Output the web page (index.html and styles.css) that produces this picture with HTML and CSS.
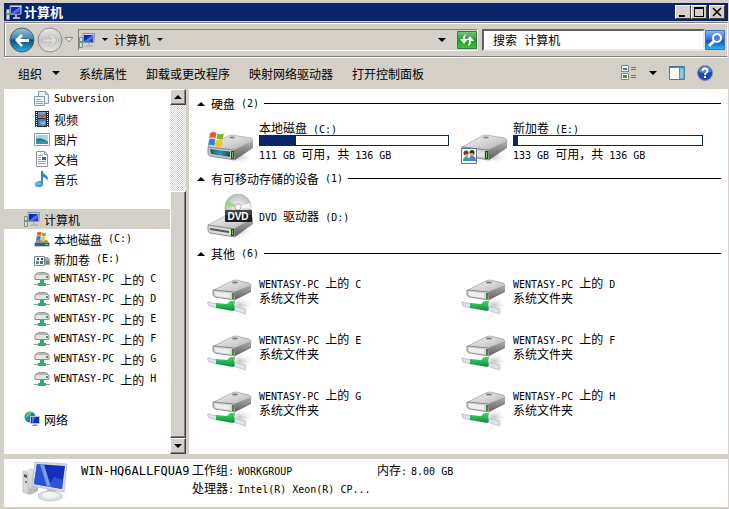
FILE: index.html
```html
<!DOCTYPE html>
<html lang="zh-CN">
<head>
    <meta charset="UTF-8">
    <meta name="viewport" content="width=device-width, initial-scale=1.0">
    <title>计算机</title>
    <link rel="stylesheet" href="styles.css">
</head>
<body>

    <!-- icon library -->
    <svg class="library" width="0" height="0" aria-hidden="true">
        <defs>
            <linearGradient id="screen" x1="0" y1="0" x2="1" y2="1">
                <stop offset="0" stop-color="#0820a0"/>
                <stop offset="0.45" stop-color="#1234c8"/>
                <stop offset="0.5" stop-color="#5a86f0"/>
                <stop offset="1" stop-color="#0a1c9c"/>
            </linearGradient>
            <linearGradient id="metal" x1="0" y1="0" x2="1" y2="1">
                <stop offset="0" stop-color="#f6f6f6"/>
                <stop offset="0.6" stop-color="#cfcfcf"/>
                <stop offset="1" stop-color="#a8a8a8"/>
            </linearGradient>
            <linearGradient id="side" x1="0" y1="0" x2="0" y2="1">
                <stop offset="0" stop-color="#b0b0b0"/>
                <stop offset="1" stop-color="#5c5c5c"/>
            </linearGradient>
            <linearGradient id="teal" x1="0" y1="0" x2="1" y2="0">
                <stop offset="0" stop-color="#1c4f74"/>
                <stop offset="0.5" stop-color="#2f9aa0"/>
                <stop offset="1" stop-color="#1c4a60"/>
            </linearGradient>
            <linearGradient id="blue-ball" x1="0" y1="0" x2="0" y2="1">
                <stop offset="0" stop-color="#9fc4dc"/>
                <stop offset="0.45" stop-color="#3f7fa8"/>
                <stop offset="0.5" stop-color="#0c4a7c"/>
                <stop offset="1" stop-color="#2cb4e4"/>
            </linearGradient>
            <linearGradient id="gray-ball" x1="0" y1="0" x2="0" y2="1">
                <stop offset="0" stop-color="#e8e8e6"/>
                <stop offset="0.5" stop-color="#c4c4c2"/>
                <stop offset="1" stop-color="#e6e6e4"/>
            </linearGradient>
            <linearGradient id="search-fill" x1="0" y1="0" x2="0" y2="1">
                <stop offset="0" stop-color="#8cb8ee"/>
                <stop offset="0.5" stop-color="#2c68d4"/>
                <stop offset="0.55" stop-color="#1450c4"/>
                <stop offset="1" stop-color="#2cb8f4"/>
            </linearGradient>
            <linearGradient id="green-fill" x1="0" y1="0" x2="0" y2="1">
                <stop offset="0" stop-color="#7cc07c"/>
                <stop offset="0.5" stop-color="#279a34"/>
                <stop offset="1" stop-color="#3fc03c"/>
            </linearGradient>
            <linearGradient id="green-pipe" x1="0" y1="0" x2="0" y2="1">
                <stop offset="0" stop-color="#4cd478"/>
                <stop offset="1" stop-color="#088a38"/>
            </linearGradient>
            <radialGradient id="shade">
                <stop offset="0" stop-color="#888" stop-opacity="0.5"/>
                <stop offset="1" stop-color="#fff" stop-opacity="0"/>
            </radialGradient>
            <radialGradient id="disc">
                <stop offset="0" stop-color="#fff"/>
                <stop offset="0.2" stop-color="#aaa"/>
                <stop offset="0.3" stop-color="#e8e8e8"/>
                <stop offset="1" stop-color="#bcbcbc"/>
            </radialGradient>
        </defs>

        <symbol id="computer" viewBox="0 0 16 16">
            <path d="M0.5 5.5h3v10h-3z" fill="#d8dcd8" stroke="#889"/>
            <path d="M1 9h2v2H1z" fill="#4cb43c"/>
            <path d="M4 1.500L15.500 1.500 15 10.500 4.500 10.500z" fill="#c8d0e4" stroke="#8890b0"/>
            <path d="M5 3h9.500L14 10H5z" fill="url(#screen)"/>
            <path d="M9 11h2v2h3v2H7v-2h2z" fill="#b4b8c0"/>
        </symbol>

        <symbol id="computer-big" viewBox="0 0 48 42">
            <ellipse cx="33" cy="36" rx="14" ry="5" fill="url(#shade)"/>
            <path d="M1 10L9 7l7 3v20l-8 4-7-3z" fill="url(#metal)"/>
            <path d="M1 10l5 2v21l-5-2z" fill="#d8d8d8" stroke="#aaa" stroke-width="0.5"/>
            <path d="M2 13l3 1v3l-3-1z" fill="#555"/>
            <circle cx="4" cy="21" r="1" fill="#667"/>
            <path d="M8 27l6 2-4 4-4-1z" fill="#bbb"/>
            <path d="M25 28l9 1-2 7h-6z" fill="#b4b8bc"/>
            <ellipse cx="28" cy="35" rx="12" ry="5" fill="#dfe1e3" stroke="#b4b4b4" stroke-width="0.6"/>
            <ellipse cx="28" cy="34" rx="8" ry="3" fill="#f4f4f4"/>
            <path d="M13 1L45 3 42 31 10 25z" fill="#d9dce0" stroke="#a8acb0" stroke-width="0.6"/>
            <path d="M15 3L43 5 40 28 12 23z" fill="#1430b8"/>
            <path d="M15 3L22 3.500 29 26 12 23z" fill="#7c9cf0"/>
            <path d="M15 3l3 0.200L25 25.500 12 23z" fill="#2c50d4"/>
            <path d="M32 16L41 19 40 28 26 25.500z" fill="#3c6cf0" opacity="0.6"/>
        </symbol>

        <symbol id="flag" viewBox="0 0 16 16">
            <path d="M2 2q3-2 6 0L7 7Q4 5 1 7z" fill="#ee5a24"/>
            <path d="M9 2q3 2 6 0l-1 5q-3 2-6 0z" fill="#7cb82c"/>
            <path d="M1 8q3-2 6 0l-1 6q-3-2-6 0z" fill="#2c84d8"/>
            <path d="M8 8q3 2 6 0l-1 6q-3 2-6 0z" fill="#fcc41c"/>
        </symbol>

        <symbol id="drive" viewBox="0 0 48 30">
            <ellipse cx="31" cy="23" rx="17" ry="7" fill="url(#shade)"/>
            <path d="M1 13L21 2Q23 1 25 1L44 4Q46 5 46 7L27 16Z" fill="url(#metal)" stroke="#999" stroke-width="0.6"/>
            <path d="M27 16L46 7V14L28 26Z" fill="url(#side)"/>
            <path d="M1 13L27 16 28 26 3 22Q1 21 1 19Z" fill="#c8c8c8" stroke="#777" stroke-width="0.8"/>
            <path d="M3 15L23 17.500V23L4 20Z" fill="#e2e2e2"/>
            <path d="M24 17h3v8h-3z" fill="#28402c"/>
            <path d="M25 18h1v6h-1z" fill="#60d03c"/>
            <ellipse cx="25" cy="3.500" rx="3" ry="1" fill="#888"/>
        </symbol>

        <symbol id="drive-system" viewBox="0 -13 48 48">
            <use href="#drive" x="0" y="4" width="48" height="30"/>
            <path d="M3 19L23 21.500V27L4 24Z" fill="url(#teal)"/>
            <use href="#flag" x="1" y="1" width="17" height="17"/>
        </symbol>

        <symbol id="drive-shared" viewBox="0 -15 48 48">
            <use href="#drive" x="0" y="2" width="48" height="30"/>
            <path d="M0.500 16.500h15v15h-15z" fill="#f4fafc" stroke="#5c7484"/>
            <circle cx="5" cy="21" r="2.500" fill="#5c4434"/>
            <circle cx="11" cy="20.500" r="2.500" fill="#3c3024"/>
            <path d="M4 22h3v3H4zM9 21h3v4H9z" fill="#d8a078"/>
            <path d="M2 29q0-4 3-4 4 0 4 4z" fill="#3ca088"/>
            <path d="M8 29q0-5 3-5 4 0 4 5z" fill="#4484c8"/>
        </symbol>

        <symbol id="drive-net" viewBox="0 -12 48 48">
            <ellipse cx="33" cy="26" rx="14" ry="9" fill="url(#shade)"/>
            <path d="M7 11L25 2Q27 1 29 1L42 4Q44 5 44 7L27 14Z" fill="url(#metal)" stroke="#888" stroke-width="0.6"/>
            <path d="M27 13L44 6V13L28 21Z" fill="url(#side)"/>
            <path d="M6 11L27 13 28 21 8 18Q6 17 6 15Z" fill="#d6d6d6" stroke="#777" stroke-width="0.8"/>
            <path d="M8 13L23 14.500V19L9 17Z" fill="#eee"/>
            <path d="M25 14h2v6h-2z" fill="#3c8a3c"/>
            <ellipse cx="28" cy="3.500" rx="3" ry="1" fill="#777"/>
            <path d="M1 23l10 2v4L2 27q-2-3-1-4z" fill="#dde4ec" stroke="#9ca8b4" stroke-width="0.6"/>
            <path d="M27 27l11 3q2 2 0 5l-11-4z" fill="#dde4ec" stroke="#9ca8b4" stroke-width="0.6"/>
            <path d="M9 24L20 25 23 22H28L27 27 28 30 26 32 9 29Z" fill="url(#green-pipe)"/>
        </symbol>

        <symbol id="net-small" viewBox="0 0 16 16">
            <path d="M2 3q0-2 6-2t6 2l1.500 1v4q0 1-1.500 1H2Q0.500 9 0.500 8V4z" fill="#8a8e8c"/>
            <path d="M1.500 4h13v4h-13z" fill="#e4e6e4"/>
            <path d="M3 3h10" stroke="#ddd"/>
            <path d="M12 5h2v2h-2z" fill="#3c9a3c"/>
            <path d="M6 9h4v3h2v3H4v-3h2z" fill="#34a878"/>
            <path d="M0 13h4v1H0zM12 13h4v1h-4z" fill="#84a498"/>
        </symbol>

        <symbol id="system-small" viewBox="0 0 16 16">
            <path d="M3 9h10l2.500 3v3.500h-15V12z" fill="#8c9298"/>
            <path d="M1 12h14v3H1z" fill="#2c6484"/>
            <path d="M11 13h3v1h-3z" fill="#74c84c"/>
            <use href="#flag" x="2" y="0" width="11" height="11"/>
        </symbol>

        <symbol id="shared-small" viewBox="0 0 16 16">
            <path d="M9 6h5l2 3v5H9z" fill="#a4a8a8"/>
            <path d="M12 10h3v3h-3z" fill="#4c9c3c"/>
            <path d="M0.500 5.500h10v9h-10z" fill="#f4f8f8" stroke="#78868c"/>
            <path d="M3 7h2v2H3zM7 7h2v2H7z" fill="#443830"/>
            <path d="M2 10h3v3H2z" fill="#3c9c8c"/>
            <path d="M6 10h3v3H6z" fill="#3c70b0"/>
        </symbol>

        <symbol id="subversion" viewBox="0 0 16 16">
            <path d="M4.500 0.500h7l3 3v9h-10z" fill="#e8f0f8" stroke="#8ca0b8"/>
            <path d="M11.500 0.500v3h3" fill="none" stroke="#8ca0b8"/>
            <path d="M0.500 5.500h10v9h-10z" fill="#f4f8fc" stroke="#8098b4"/>
            <path d="M2 8h5v1H2zM2 10h7v1H2zM2 12h7v1H2z" fill="#88a4c0"/>
        </symbol>

        <symbol id="video" viewBox="0 0 16 16">
            <path d="M1 0h14v16H1z" fill="#282c34"/>
            <path d="M4 1h8v6H4z" fill="#6ca4d4"/>
            <path d="M4 8h8v7H4z" fill="#3c7cc0"/>
            <path d="M5 2l3 2 4-2v3L8 7 5 6z" fill="#b45c4c"/>
            <path d="M5 10l3 1 3-1v3l-3 1z" fill="#7cc0e8"/>
            <path d="M2.500 1v15M13.500 1v15" stroke="#fff" stroke-dasharray="1 1"/>
        </symbol>

        <symbol id="picture" viewBox="0 0 16 16">
            <path d="M0.500 2.500h15v12h-15z" fill="#fff" stroke="#8c98a4"/>
            <path d="M2 4h12v5H2z" fill="#a8d4ec"/>
            <path d="M2 8l4-1 8 3v3H2z" fill="#2c7c84"/>
            <path d="M2 10h12v3H2z" fill="#3c90a8"/>
        </symbol>

        <symbol id="document" viewBox="0 0 16 16">
            <path d="M2.500 0.500h8l3 3v12h-11z" fill="#fff" stroke="#8c98a4"/>
            <path d="M10.500 0.500v3h3" fill="none" stroke="#8c98a4"/>
            <path d="M4 4h5v1H4zM4 6h3v1H4zM4 8h3v1H4zM4 10h8v1H4zM4 12h8v1H4z" fill="#8ca0b4"/>
            <path d="M8 6h4v3H8z" fill="#2c6cac"/>
        </symbol>

        <symbol id="music" viewBox="0 0 16 16">
            <path d="M7 0h2q0 3 3 4 3 2 1 6 0-3-4-4v7q0 3-4 3-4 0-4-3 0-3 6-3z" fill="#2c88d0"/>
            <ellipse cx="4.500" cy="12.500" rx="3" ry="2" fill="#64b8ec"/>
        </symbol>

        <symbol id="network" viewBox="0 0 16 16">
            <circle cx="6" cy="6" r="5.500" fill="#2878c8"/>
            <path d="M2 3q3-3 6-2L6 5 3 6 1 8zM7 7l3-2v3l-3 4z" fill="#58c470"/>
            <path d="M6.500 5.500h9v7h-9z" fill="#1430b8" stroke="#b8c4dc"/>
            <path d="M8 6h3l-2 6H8z" fill="#5078e8"/>
            <path d="M10 13h2v1h2v1H8v-1h2z" fill="#8c98a8"/>
        </symbol>
    </svg>

    <header class="title-bar">
        <svg class="icon"><use href="#computer"/></svg>
        <h1>计算机</h1>
        <div class="window-buttons">
            <button aria-label="最小化"><svg viewBox="0 0 12 10"><path d="M2 8h6v2H2z"/></svg></button>
            <button aria-label="最大化"><svg viewBox="0 0 12 10"><path d="M1 0h10v10H1zM2 2v7h8V2z" fill-rule="evenodd"/></svg></button>
            <button class="close" aria-label="关闭"><svg viewBox="0 0 12 10"><path d="M2 1l8 8M10 1L2 9" fill="none" stroke="#000" stroke-width="1.600"/></svg></button>
        </div>
    </header>

    <nav class="nav-bar">
        <div class="history">
            <button aria-label="后退">
                <svg viewBox="0 0 26 26">
                    <circle cx="13" cy="13" r="12" fill="url(#blue-ball)" stroke="#4c6474"/>
                    <path d="M6 13l6-6 2 2-3 3h9v3h-9l3 3-2 2z" fill="#fff"/>
                </svg>
            </button>
            <button aria-label="前进">
                <svg viewBox="0 0 26 26">
                    <circle cx="13" cy="13" r="12" fill="url(#gray-ball)" stroke="#8c8c8a"/>
                    <path d="M20 13l-6-6-2 2 3 3H6v3h9l-3 3 2 2z" fill="#dededc" stroke="#b4b4b2" stroke-width="0.600"/>
                </svg>
            </button>
            <button class="recent" aria-label="最近的页面">
                <svg viewBox="0 0 10 6"><path d="M1 0.500h8L5 5z" fill="#eee" stroke="#888"/></svg>
            </button>
        </div>
        <div class="address">
            <svg class="icon"><use href="#computer"/></svg>
            <button class="crumb-arrow" aria-label="展开"><span class="down small"></span></button>
            <a href="#">计算机</a>
            <button class="crumb-arrow" aria-label="展开计算机"><span class="down small"></span></button>
            <button class="address-list" aria-label="以前的位置"><span class="down"></span></button>
            <button class="refresh" aria-label="刷新">
                <svg viewBox="0 0 20 18">
                    <path d="M0.500 0.500h19v17h-19z" fill="url(#green-fill)" stroke="#2c8434"/>
                    <path d="M9 3Q6 4 6 8H3l4 5 4-5H8Q8 5 9 3z" fill="#fff"/>
                    <path d="M11 15q3-1 3-5h3l-4-5-3 4h2q0 4-1 6z" fill="#fff"/>
                </svg>
            </button>
        </div>
        <form class="search">
            <input type="text" aria-label="搜索" value="搜索 计算机">
            <button type="button" aria-label="开始搜索">
                <svg viewBox="0 0 20 20">
                    <path d="M0.500 0.500h19v19h-19z" fill="url(#search-fill)" stroke="#3c74c4"/>
                    <path d="M9 11l-5 5" stroke="#fff" stroke-width="3"/>
                    <circle cx="12" cy="8" r="4" fill="#4c84dc" stroke="#fff" stroke-width="2"/>
                </svg>
            </button>
        </form>
    </nav>

    <div class="toolbar">
        <button>组织 <span class="down"></span></button>
        <button>系统属性</button>
        <button>卸载或更改程序</button>
        <button>映射网络驱动器</button>
        <button>打开控制面板</button>
        <div class="toolbar-right">
            <button aria-label="更改视图">
                <svg class="icon" viewBox="0 0 16 16">
                    <path d="M0.500 0.500h7v6h-7zM0.500 8.500h7v6h-7z" fill="#fff" stroke="#7c8490"/>
                    <path d="M2 3h4v2H2z" fill="#2c7c9c"/>
                    <path d="M2 10h4v3H2z" fill="#5c8c2c"/>
                    <path d="M10 2h5v1h-5zM10 4h5v1h-5zM10 10h5v1h-5zM10 12h5v1h-5z" fill="#5c7498"/>
                </svg>
                <span class="down"></span>
            </button>
            <button aria-label="预览窗格">
                <svg class="icon" viewBox="0 0 16 16">
                    <path d="M0.500 1.500h15v13h-15z" fill="#fff" stroke="#3c7ca0"/>
                    <path d="M1 2h14v1H1z" fill="#3c8cb4"/>
                    <path d="M10.500 3h4.500v11h-4.500z" fill="#90c8e0" stroke="#4c94b8"/>
                </svg>
            </button>
            <button aria-label="帮助">
                <svg class="icon" viewBox="0 0 16 16">
                    <circle cx="8" cy="8" r="7.500" fill="#1c48b0" stroke="#8090b4"/>
                    <path d="M2 7a6 6 0 0 1 12 0q-6 2-12 0z" fill="#5c84d8"/>
                    <path d="M5.500 6q0-2.500 2.500-2.500T10.500 6Q10.500 7 9 8q-1 0.500-1 2" fill="none" stroke="#fff" stroke-width="1.800"/>
                    <path d="M7 11h2v2H7z" fill="#fff"/>
                </svg>
            </button>
        </div>
    </div>

    <div class="main">
        <aside class="sidebar">
            <ul class="tree">
                <li><a class="child" href="#"><svg class="icon"><use href="#subversion"/></svg><span class="en">Subversion</span></a></li>
                <li><a class="child" href="#"><svg class="icon"><use href="#video"/></svg>视频</a></li>
                <li><a class="child" href="#"><svg class="icon"><use href="#picture"/></svg>图片</a></li>
                <li><a class="child" href="#"><svg class="icon"><use href="#document"/></svg>文档</a></li>
                <li><a class="child" href="#"><svg class="icon"><use href="#music"/></svg>音乐</a></li>
            </ul>
            <ul class="tree">
                <li><a class="selected" href="#"><svg class="icon"><use href="#computer"/></svg>计算机</a></li>
                <li><a class="child" href="#"><svg class="icon"><use href="#system-small"/></svg>本地磁盘<span class="en"> (C:)</span></a></li>
                <li><a class="child" href="#"><svg class="icon"><use href="#shared-small"/></svg>新加卷<span class="en"> (E:)</span></a></li>
                <li><a class="child" href="#"><svg class="icon"><use href="#net-small"/></svg><span class="en">WENTASY-PC </span>上的<span class="en"> C</span></a></li>
                <li><a class="child" href="#"><svg class="icon"><use href="#net-small"/></svg><span class="en">WENTASY-PC </span>上的<span class="en"> D</span></a></li>
                <li><a class="child" href="#"><svg class="icon"><use href="#net-small"/></svg><span class="en">WENTASY-PC </span>上的<span class="en"> E</span></a></li>
                <li><a class="child" href="#"><svg class="icon"><use href="#net-small"/></svg><span class="en">WENTASY-PC </span>上的<span class="en"> F</span></a></li>
                <li><a class="child" href="#"><svg class="icon"><use href="#net-small"/></svg><span class="en">WENTASY-PC </span>上的<span class="en"> G</span></a></li>
                <li><a class="child" href="#"><svg class="icon"><use href="#net-small"/></svg><span class="en">WENTASY-PC </span>上的<span class="en"> H</span></a></li>
            </ul>
            <ul class="tree">
                <li><a href="#"><svg class="icon"><use href="#network"/></svg>网络</a></li>
            </ul>
        </aside>
        <div class="scrollbar">
            <button aria-label="向上滚动"><span class="up"></span></button>
            <div class="track"></div>
            <div class="thumb"></div>
            <button aria-label="向下滚动"><span class="down"></span></button>
        </div>

        <main class="content">
            <section>
                <h2><span class="up"></span>硬盘<span class="en"> (2)</span></h2>
                <div class="tiles">
                    <div class="tile">
                        <svg class="picture"><use href="#drive-system"/></svg>
                        <div class="info">
                            <p>本地磁盘<span class="en"> (C:)</span></p>
                            <div class="bar"><div class="used" style="width: 19%"></div></div>
                            <p><span class="en">111 GB </span>可用，共<span class="en"> 136 GB</span></p>
                        </div>
                    </div>
                    <div class="tile">
                        <svg class="picture"><use href="#drive-shared"/></svg>
                        <div class="info">
                            <p>新加卷<span class="en"> (E:)</span></p>
                            <div class="bar"><div class="used" style="width: 2%"></div></div>
                            <p><span class="en">133 GB </span>可用，共<span class="en"> 136 GB</span></p>
                        </div>
                    </div>
                </div>
            </section>

            <section>
                <h2><span class="up"></span>有可移动存储的设备<span class="en"> (1)</span></h2>
                <div class="tiles">
                    <div class="tile">
                        <svg class="picture" viewBox="0 -1 48 48">
                            <ellipse cx="30" cy="39" rx="17" ry="7" fill="url(#shade)"/>
                            <path d="M1 32L18 23 46 25 27 36Z" fill="url(#metal)" stroke="#999" stroke-width="0.6"/>
                            <path d="M27 36L46 25V31L28 44Z" fill="url(#side)"/>
                            <path d="M1 32L27 36 28 44 3 40Q1 39 1 37Z" fill="#d8d8d8" stroke="#777" stroke-width="0.8"/>
                            <path d="M3 35L22 38V40L3 37z" fill="#555"/>
                            <path d="M24 36h3v7h-3z" fill="#28402c"/>
                            <path d="M25 37h1v5h-1z" fill="#60d03c"/>
                            <circle cx="31" cy="14" r="13" fill="url(#disc)" stroke="#aaa" stroke-width="0.6"/>
                            <path d="M31 14L18 13 20 7Z" fill="#8ce05c" opacity="0.8"/>
                            <path d="M31 14L44 16 43 10Z" fill="#fff" opacity="0.8"/>
                            <circle cx="31" cy="14" r="3" fill="#fff" stroke="#999" stroke-width="0.6"/>
                            <rect x="18" y="17" width="27" height="12" rx="1" fill="#1c1c1c"/>
                            <path d="M18 17h27v5H18z" fill="#444"/>
                            <text class="dvd-label" x="31" y="27" text-anchor="middle">DVD</text>
                        </svg>
                        <div class="info">
                            <p><span class="en">DVD </span>驱动器<span class="en"> (D:)</span></p>
                        </div>
                    </div>
                </div>
            </section>

            <section>
                <h2><span class="up"></span>其他<span class="en"> (6)</span></h2>
                <div class="tiles">
                    <div class="tile">
                        <svg class="picture"><use href="#drive-net"/></svg>
                        <div class="info"><p><span class="en">WENTASY-PC </span>上的<span class="en"> C</span></p><p>系统文件夹</p></div>
                    </div>
                    <div class="tile">
                        <svg class="picture"><use href="#drive-net"/></svg>
                        <div class="info"><p><span class="en">WENTASY-PC </span>上的<span class="en"> D</span></p><p>系统文件夹</p></div>
                    </div>
                    <div class="tile">
                        <svg class="picture"><use href="#drive-net"/></svg>
                        <div class="info"><p><span class="en">WENTASY-PC </span>上的<span class="en"> E</span></p><p>系统文件夹</p></div>
                    </div>
                    <div class="tile">
                        <svg class="picture"><use href="#drive-net"/></svg>
                        <div class="info"><p><span class="en">WENTASY-PC </span>上的<span class="en"> F</span></p><p>系统文件夹</p></div>
                    </div>
                    <div class="tile">
                        <svg class="picture"><use href="#drive-net"/></svg>
                        <div class="info"><p><span class="en">WENTASY-PC </span>上的<span class="en"> G</span></p><p>系统文件夹</p></div>
                    </div>
                    <div class="tile">
                        <svg class="picture"><use href="#drive-net"/></svg>
                        <div class="info"><p><span class="en">WENTASY-PC </span>上的<span class="en"> H</span></p><p>系统文件夹</p></div>
                    </div>
                </div>
            </section>
        </main>
    </div>

    <footer class="details">
        <svg width="48" height="42"><use href="#computer-big"/></svg>
        <p class="name">WIN-HQ6ALLFQUA9</p>
        <dl>
            <dt>工作组<span class="en">:</span></dt>
            <dd class="en">WORKGROUP</dd>
            <dt>处理器<span class="en">:</span></dt>
            <dd class="en">Intel(R) Xeon(R) CP...</dd>
        </dl>
        <dl>
            <dt>内存<span class="en">:</span></dt>
            <dd class="en">8.00 GB</dd>
        </dl>
    </footer>

</body>
</html>
```
FILE: styles.css
```css
* {
    box-sizing: border-box;
}

body {
    display: flex;
    flex-direction: column;
    min-height: 100vh;
    margin: 0;
    padding: 3px 1px 2px 4px;
    background-color: #d4d0c8;
    color: #000;
    font-family: "Noto Sans CJK SC", sans-serif;
    font-size: 12px;
    line-height: 15px;
}

h1, h2, p, ul, dl, dd {
    margin: 0;
    padding: 0;
}

a {
    color: inherit;
    text-decoration: none;
}

button {
    display: flex;
    align-items: center;
    justify-content: center;
    padding: 0;
    border: none;
    background: none;
    color: inherit;
    font: inherit;
}

svg {
    display: block;
    flex: none;
}

.library {
    position: absolute;
}

/* half-width text next to the 12px Chinese */
.en {
    font-family: "DejaVu Sans Mono", monospace;
    font-size: 10px;
    line-height: 10px;
    white-space: pre;
}

.icon {
    width: 16px;
    height: 16px;
}

.down {
    border: 4px solid transparent;
    border-top-color: #000;
    border-bottom: none;
}

.down.small {
    border-width: 3px;
    border-bottom: none;
}

.up {
    border: 4px solid transparent;
    border-bottom-color: #000;
    border-top: none;
}

/* title bar */
.title-bar {
    display: flex;
    align-items: center;
    height: 18px;
    padding: 0 3px 0 2px;
    background-color: #0a246a;
    color: #fff;
}

.title-bar h1 {
    flex: 1;
    margin-left: 2px;
    font-size: 13px;
    line-height: 18px;
}

.window-buttons {
    display: flex;
}

.window-buttons button {
    width: 16px;
    height: 14px;
    border: 1px solid;
    border-color: #fff #404040 #404040 #fff;
    background-color: #d4d0c8;
}

.window-buttons svg {
    width: 12px;
    height: 10px;
}

.window-buttons .close {
    margin-left: 2px;
}

/* navigation */
.nav-bar {
    display: flex;
    align-items: center;
    height: 35px;
    margin-top: 1px;
    padding: 0 2px 0 3px;
    border: 1px solid #808080;
    border-right-color: #fff;
    box-shadow: inset 1px 1px #fff, 0 1px #fff;
}

.history {
    display: flex;
    align-items: center;
    margin-right: 4px;
}

.history button {
    width: 28px;
    height: 28px;
}

.history svg {
    width: 26px;
    height: 26px;
}

.history .recent {
    width: 10px;
}

.recent svg {
    width: 10px;
    height: 6px;
}

.address {
    display: flex;
    flex: 2;
    align-items: center;
    height: 22px;
    margin-right: 4px;
    border: 1px solid;
    border-color: #808080 #fff #fff #808080;
}

.crumb-arrow {
    width: 19px;
    height: 18px;
}

.address-list {
    width: 18px;
    height: 18px;
    margin-left: auto;
    margin-right: 6px;
}

.refresh svg {
    width: 20px;
    height: 18px;
}

.search {
    display: flex;
    flex: 1;
    align-items: center;
    min-width: 243px;
}

.search input {
    flex: 1;
    min-width: 0;
    height: 22px;
    padding: 0 9px;
    border: 2px solid;
    border-color: #606060 #e8e8e8 #e8e8e8 #606060;
    background-color: #fff;
    color: #000;
    font-family: "Liberation Mono", "Noto Sans CJK SC", monospace;
    font-size: 12px;
}

.search svg {
    width: 20px;
    height: 20px;
}

/* toolbar */
.toolbar {
    display: flex;
    align-items: center;
    gap: 19px;
    height: 32px;
    padding: 0 15px 0 14px;
}

.toolbar button {
    gap: 10px;
}

.toolbar-right {
    display: flex;
    gap: 12px;
    margin-left: auto;
}

.toolbar-right button:first-child {
    gap: 12px;
}

/* sidebar */
.main {
    display: flex;
    flex: 1;
}

.sidebar {
    width: 166px;
    background-color: #fff;
}

.tree {
    margin-bottom: 20px;
    list-style: none;
}

.tree a {
    display: flex;
    align-items: center;
    height: 20px;
    padding-left: 20px;
}

.tree a.child {
    padding-left: 30px;
}

.tree .icon {
    margin-right: 4px;
}

.tree .selected {
    background-color: #d4d0c8;
}

.scrollbar {
    display: flex;
    flex-direction: column;
    width: 16px;
}

.scrollbar button, .thumb {
    border: 1px solid;
    border-color: #fff #404040 #404040 #fff;
    background-color: #d4d0c8;
    box-shadow: inset -1px -1px #808080;
}

.scrollbar button {
    height: 16px;
}

.track {
    flex: 87;
    background: repeating-conic-gradient(#fff 0 25%, #d4d0c8 0 50%) 0 0 / 2px 2px;
}

.thumb {
    flex: 246;
}

/* drives */
.content {
    flex: 1;
    margin-left: 3px;
    padding: 5px 7px 0 8px;
    background-color: #fff;
}

.content h2 {
    display: flex;
    align-items: center;
    height: 19px;
    font-size: 12px;
    font-weight: normal;
}

.content h2 .up {
    margin-right: 6px;
}

.content h2::after {
    content: "";
    flex: 1;
    height: 1px;
    margin-left: 5px;
    background-color: #000;
}

.tiles {
    display: grid;
    grid-template-columns: repeat(auto-fill, 254px);
    padding-left: 10px;
}

.tile {
    display: flex;
    align-items: center;
    gap: 4px;
    height: 56px;
}

.picture {
    width: 48px;
    height: 48px;
}

.dvd-label {
    fill: #fff;
    font: bold 10px "Liberation Sans", sans-serif;
}

.info {
    padding-bottom: 2px;
}

.bar {
    width: 190px;
    height: 11px;
    border: 1px solid #0a246a;
}

.used {
    height: 100%;
    background-color: #0a246a;
}

/* details */
.details {
    display: flex;
    height: 48px;
    margin-top: 5px;
    padding: 2px 18px;
    background-color: #fff;
}

.details .name {
    width: 111px;
    margin: 3px 0 0 11px;
    font-family: "DejaVu Sans Mono", monospace;
}

.details dl {
    display: grid;
    grid-template-columns: auto auto;
    grid-auto-rows: 18px;
    align-content: start;
    align-items: baseline;
    justify-content: start;
    column-gap: 4px;
    width: 185px;
    line-height: 18px;
}
```
